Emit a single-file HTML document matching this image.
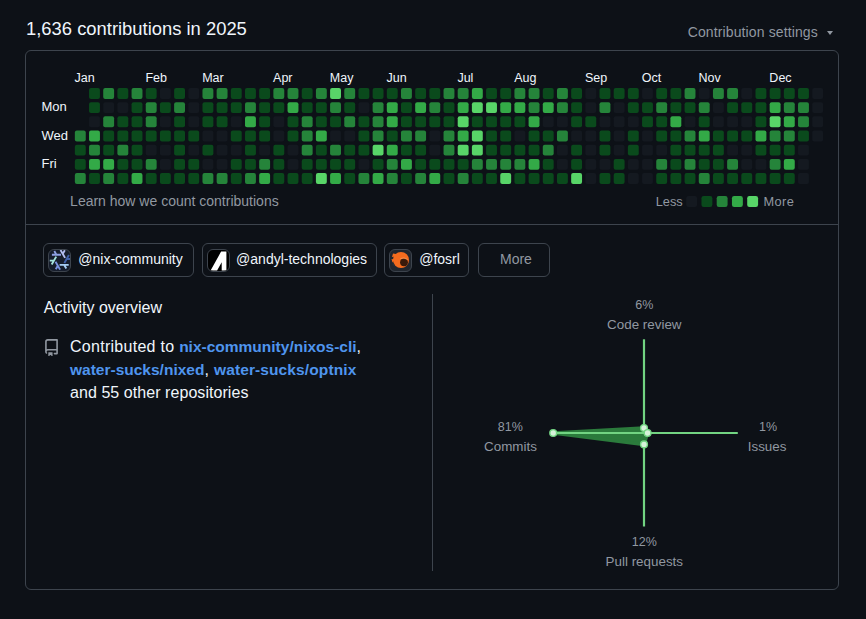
<!DOCTYPE html>
<html><head><meta charset="utf-8">
<style>
html,body{margin:0;padding:0;}
body{width:866px;height:619px;background:#0d1117;position:relative;overflow:hidden;font-family:"Liberation Sans",sans-serif;color:#f0f6fc;}
.a{position:absolute;white-space:nowrap;}
.title{left:26px;top:19.6px;font-size:18.4px;line-height:18.4px;color:#f0f6fc;}
.settings{left:687.7px;top:25.3px;font-size:14px;line-height:14px;color:#9198a1;letter-spacing:0.12px;}
.caret{position:absolute;left:827px;top:30.6px;width:0;height:0;border-left:3.6px solid transparent;border-right:3.6px solid transparent;border-top:4.6px solid #9198a1;}
.box{position:absolute;left:25px;top:50px;width:812px;height:538px;border:1px solid #3d444d;border-radius:6px;}
.mon{position:absolute;top:72px;font-size:12.5px;line-height:12.5px;color:#f0f6fc;white-space:nowrap;}
.day{position:absolute;left:41.5px;font-size:13px;line-height:13px;color:#f0f6fc;}
.muted{color:#9198a1;}
.divider{position:absolute;left:26px;top:224px;width:812px;height:1px;background:#3d444d;}
.btn{position:absolute;top:243px;height:32px;border:1px solid #3d444d;border-radius:6px;box-sizing:content-box;}
.av{position:absolute;top:5px;left:4px;width:21px;height:21px;border:1px solid #3d444d;border-radius:6px;overflow:hidden;background:#151b23;}
.bt{position:absolute;top:7.6px;font-size:14px;line-height:14px;color:#f0f6fc;white-space:nowrap;}
.lnk{color:#4f95ee;font-weight:bold;font-size:15.5px;}
.ln{position:absolute;left:70px;font-size:16px;line-height:16px;white-space:nowrap;color:#f0f6fc;}
.rl{position:absolute;color:#9198a1;white-space:nowrap;text-align:center;width:120px;}
</style></head><body>
<div class="a title">1,636 contributions in 2025</div>
<div class="a settings">Contribution settings</div>
<div class="caret"></div>
<div class="box"></div>
<div class="mon" style="left:74.55px">Jan</div>
<div class="mon" style="left:145.45px">Feb</div>
<div class="mon" style="left:202.17px">Mar</div>
<div class="mon" style="left:273.07px">Apr</div>
<div class="mon" style="left:329.79px">May</div>
<div class="mon" style="left:386.51px">Jun</div>
<div class="mon" style="left:457.41px">Jul</div>
<div class="mon" style="left:514.13px">Aug</div>
<div class="mon" style="left:585.03px">Sep</div>
<div class="mon" style="left:641.75px">Oct</div>
<div class="mon" style="left:698.47px">Nov</div>
<div class="mon" style="left:769.37px">Dec</div>
<div class="day" style="top:100px">Mon</div>
<div class="day" style="top:128.7px">Wed</div>
<div class="day" style="top:157px">Fri</div>
<svg width="866" height="619" style="position:absolute;left:0;top:0">
<rect x="74.85" y="130.54" width="10.9" height="10.9" rx="2" fill="#25843a"/>
<rect x="74.85" y="144.72" width="10.9" height="10.9" rx="2" fill="#0a4a1c"/>
<rect x="74.85" y="158.90" width="10.9" height="10.9" rx="2" fill="#0a4a1c"/>
<rect x="74.85" y="173.08" width="10.9" height="10.9" rx="2" fill="#25843a"/>
<rect x="89.03" y="88.00" width="10.9" height="10.9" rx="2" fill="#0a4a1c"/>
<rect x="89.03" y="102.18" width="10.9" height="10.9" rx="2" fill="#0a4a1c"/>
<rect x="89.03" y="116.36" width="10.9" height="10.9" rx="2" fill="#141920"/>
<rect x="89.03" y="130.54" width="10.9" height="10.9" rx="2" fill="#33aa47"/>
<rect x="89.03" y="144.72" width="10.9" height="10.9" rx="2" fill="#25843a"/>
<rect x="89.03" y="158.90" width="10.9" height="10.9" rx="2" fill="#33aa47"/>
<rect x="89.03" y="173.08" width="10.9" height="10.9" rx="2" fill="#0a4a1c"/>
<rect x="103.21" y="88.00" width="10.9" height="10.9" rx="2" fill="#25843a"/>
<rect x="103.21" y="102.18" width="10.9" height="10.9" rx="2" fill="#141920"/>
<rect x="103.21" y="116.36" width="10.9" height="10.9" rx="2" fill="#25843a"/>
<rect x="103.21" y="130.54" width="10.9" height="10.9" rx="2" fill="#0a4a1c"/>
<rect x="103.21" y="144.72" width="10.9" height="10.9" rx="2" fill="#0a4a1c"/>
<rect x="103.21" y="158.90" width="10.9" height="10.9" rx="2" fill="#33aa47"/>
<rect x="103.21" y="173.08" width="10.9" height="10.9" rx="2" fill="#25843a"/>
<rect x="117.39" y="88.00" width="10.9" height="10.9" rx="2" fill="#0a4a1c"/>
<rect x="117.39" y="102.18" width="10.9" height="10.9" rx="2" fill="#141920"/>
<rect x="117.39" y="116.36" width="10.9" height="10.9" rx="2" fill="#0a4a1c"/>
<rect x="117.39" y="130.54" width="10.9" height="10.9" rx="2" fill="#0a4a1c"/>
<rect x="117.39" y="144.72" width="10.9" height="10.9" rx="2" fill="#25843a"/>
<rect x="117.39" y="158.90" width="10.9" height="10.9" rx="2" fill="#0a4a1c"/>
<rect x="117.39" y="173.08" width="10.9" height="10.9" rx="2" fill="#0a4a1c"/>
<rect x="131.57" y="88.00" width="10.9" height="10.9" rx="2" fill="#25843a"/>
<rect x="131.57" y="102.18" width="10.9" height="10.9" rx="2" fill="#0a4a1c"/>
<rect x="131.57" y="116.36" width="10.9" height="10.9" rx="2" fill="#0a4a1c"/>
<rect x="131.57" y="130.54" width="10.9" height="10.9" rx="2" fill="#0a4a1c"/>
<rect x="131.57" y="144.72" width="10.9" height="10.9" rx="2" fill="#0a4a1c"/>
<rect x="131.57" y="158.90" width="10.9" height="10.9" rx="2" fill="#0a4a1c"/>
<rect x="131.57" y="173.08" width="10.9" height="10.9" rx="2" fill="#33aa47"/>
<rect x="145.75" y="88.00" width="10.9" height="10.9" rx="2" fill="#0a4a1c"/>
<rect x="145.75" y="102.18" width="10.9" height="10.9" rx="2" fill="#25843a"/>
<rect x="145.75" y="116.36" width="10.9" height="10.9" rx="2" fill="#25843a"/>
<rect x="145.75" y="130.54" width="10.9" height="10.9" rx="2" fill="#0a4a1c"/>
<rect x="145.75" y="144.72" width="10.9" height="10.9" rx="2" fill="#141920"/>
<rect x="145.75" y="158.90" width="10.9" height="10.9" rx="2" fill="#25843a"/>
<rect x="145.75" y="173.08" width="10.9" height="10.9" rx="2" fill="#0a4a1c"/>
<rect x="159.93" y="88.00" width="10.9" height="10.9" rx="2" fill="#141920"/>
<rect x="159.93" y="102.18" width="10.9" height="10.9" rx="2" fill="#0a4a1c"/>
<rect x="159.93" y="116.36" width="10.9" height="10.9" rx="2" fill="#141920"/>
<rect x="159.93" y="130.54" width="10.9" height="10.9" rx="2" fill="#0a4a1c"/>
<rect x="159.93" y="144.72" width="10.9" height="10.9" rx="2" fill="#141920"/>
<rect x="159.93" y="158.90" width="10.9" height="10.9" rx="2" fill="#141920"/>
<rect x="159.93" y="173.08" width="10.9" height="10.9" rx="2" fill="#0a4a1c"/>
<rect x="174.11" y="88.00" width="10.9" height="10.9" rx="2" fill="#0a4a1c"/>
<rect x="174.11" y="102.18" width="10.9" height="10.9" rx="2" fill="#25843a"/>
<rect x="174.11" y="116.36" width="10.9" height="10.9" rx="2" fill="#0a4a1c"/>
<rect x="174.11" y="130.54" width="10.9" height="10.9" rx="2" fill="#0a4a1c"/>
<rect x="174.11" y="144.72" width="10.9" height="10.9" rx="2" fill="#0a4a1c"/>
<rect x="174.11" y="158.90" width="10.9" height="10.9" rx="2" fill="#0a4a1c"/>
<rect x="174.11" y="173.08" width="10.9" height="10.9" rx="2" fill="#0a4a1c"/>
<rect x="188.29" y="88.00" width="10.9" height="10.9" rx="2" fill="#141920"/>
<rect x="188.29" y="102.18" width="10.9" height="10.9" rx="2" fill="#141920"/>
<rect x="188.29" y="116.36" width="10.9" height="10.9" rx="2" fill="#141920"/>
<rect x="188.29" y="130.54" width="10.9" height="10.9" rx="2" fill="#0a4a1c"/>
<rect x="188.29" y="144.72" width="10.9" height="10.9" rx="2" fill="#141920"/>
<rect x="188.29" y="158.90" width="10.9" height="10.9" rx="2" fill="#0a4a1c"/>
<rect x="188.29" y="173.08" width="10.9" height="10.9" rx="2" fill="#0a4a1c"/>
<rect x="202.47" y="88.00" width="10.9" height="10.9" rx="2" fill="#25843a"/>
<rect x="202.47" y="102.18" width="10.9" height="10.9" rx="2" fill="#0a4a1c"/>
<rect x="202.47" y="116.36" width="10.9" height="10.9" rx="2" fill="#0a4a1c"/>
<rect x="202.47" y="130.54" width="10.9" height="10.9" rx="2" fill="#141920"/>
<rect x="202.47" y="144.72" width="10.9" height="10.9" rx="2" fill="#0a4a1c"/>
<rect x="202.47" y="158.90" width="10.9" height="10.9" rx="2" fill="#141920"/>
<rect x="202.47" y="173.08" width="10.9" height="10.9" rx="2" fill="#25843a"/>
<rect x="216.65" y="88.00" width="10.9" height="10.9" rx="2" fill="#25843a"/>
<rect x="216.65" y="102.18" width="10.9" height="10.9" rx="2" fill="#0a4a1c"/>
<rect x="216.65" y="116.36" width="10.9" height="10.9" rx="2" fill="#0a4a1c"/>
<rect x="216.65" y="130.54" width="10.9" height="10.9" rx="2" fill="#141920"/>
<rect x="216.65" y="144.72" width="10.9" height="10.9" rx="2" fill="#141920"/>
<rect x="216.65" y="158.90" width="10.9" height="10.9" rx="2" fill="#141920"/>
<rect x="216.65" y="173.08" width="10.9" height="10.9" rx="2" fill="#25843a"/>
<rect x="230.83" y="88.00" width="10.9" height="10.9" rx="2" fill="#0a4a1c"/>
<rect x="230.83" y="102.18" width="10.9" height="10.9" rx="2" fill="#0a4a1c"/>
<rect x="230.83" y="116.36" width="10.9" height="10.9" rx="2" fill="#141920"/>
<rect x="230.83" y="130.54" width="10.9" height="10.9" rx="2" fill="#0a4a1c"/>
<rect x="230.83" y="144.72" width="10.9" height="10.9" rx="2" fill="#141920"/>
<rect x="230.83" y="158.90" width="10.9" height="10.9" rx="2" fill="#0a4a1c"/>
<rect x="230.83" y="173.08" width="10.9" height="10.9" rx="2" fill="#0a4a1c"/>
<rect x="245.01" y="88.00" width="10.9" height="10.9" rx="2" fill="#0a4a1c"/>
<rect x="245.01" y="102.18" width="10.9" height="10.9" rx="2" fill="#25843a"/>
<rect x="245.01" y="116.36" width="10.9" height="10.9" rx="2" fill="#33aa47"/>
<rect x="245.01" y="130.54" width="10.9" height="10.9" rx="2" fill="#0a4a1c"/>
<rect x="245.01" y="144.72" width="10.9" height="10.9" rx="2" fill="#0a4a1c"/>
<rect x="245.01" y="158.90" width="10.9" height="10.9" rx="2" fill="#0a4a1c"/>
<rect x="245.01" y="173.08" width="10.9" height="10.9" rx="2" fill="#25843a"/>
<rect x="259.19" y="88.00" width="10.9" height="10.9" rx="2" fill="#0a4a1c"/>
<rect x="259.19" y="102.18" width="10.9" height="10.9" rx="2" fill="#0a4a1c"/>
<rect x="259.19" y="116.36" width="10.9" height="10.9" rx="2" fill="#0a4a1c"/>
<rect x="259.19" y="130.54" width="10.9" height="10.9" rx="2" fill="#0a4a1c"/>
<rect x="259.19" y="144.72" width="10.9" height="10.9" rx="2" fill="#141920"/>
<rect x="259.19" y="158.90" width="10.9" height="10.9" rx="2" fill="#25843a"/>
<rect x="259.19" y="173.08" width="10.9" height="10.9" rx="2" fill="#33aa47"/>
<rect x="273.37" y="88.00" width="10.9" height="10.9" rx="2" fill="#25843a"/>
<rect x="273.37" y="102.18" width="10.9" height="10.9" rx="2" fill="#0a4a1c"/>
<rect x="273.37" y="116.36" width="10.9" height="10.9" rx="2" fill="#141920"/>
<rect x="273.37" y="130.54" width="10.9" height="10.9" rx="2" fill="#141920"/>
<rect x="273.37" y="144.72" width="10.9" height="10.9" rx="2" fill="#0a4a1c"/>
<rect x="273.37" y="158.90" width="10.9" height="10.9" rx="2" fill="#0a4a1c"/>
<rect x="273.37" y="173.08" width="10.9" height="10.9" rx="2" fill="#0a4a1c"/>
<rect x="287.55" y="88.00" width="10.9" height="10.9" rx="2" fill="#25843a"/>
<rect x="287.55" y="102.18" width="10.9" height="10.9" rx="2" fill="#33aa47"/>
<rect x="287.55" y="116.36" width="10.9" height="10.9" rx="2" fill="#0a4a1c"/>
<rect x="287.55" y="130.54" width="10.9" height="10.9" rx="2" fill="#0a4a1c"/>
<rect x="287.55" y="144.72" width="10.9" height="10.9" rx="2" fill="#141920"/>
<rect x="287.55" y="158.90" width="10.9" height="10.9" rx="2" fill="#141920"/>
<rect x="287.55" y="173.08" width="10.9" height="10.9" rx="2" fill="#0a4a1c"/>
<rect x="301.73" y="88.00" width="10.9" height="10.9" rx="2" fill="#0a4a1c"/>
<rect x="301.73" y="102.18" width="10.9" height="10.9" rx="2" fill="#0a4a1c"/>
<rect x="301.73" y="116.36" width="10.9" height="10.9" rx="2" fill="#25843a"/>
<rect x="301.73" y="130.54" width="10.9" height="10.9" rx="2" fill="#25843a"/>
<rect x="301.73" y="144.72" width="10.9" height="10.9" rx="2" fill="#25843a"/>
<rect x="301.73" y="158.90" width="10.9" height="10.9" rx="2" fill="#0a4a1c"/>
<rect x="301.73" y="173.08" width="10.9" height="10.9" rx="2" fill="#0a4a1c"/>
<rect x="315.91" y="88.00" width="10.9" height="10.9" rx="2" fill="#25843a"/>
<rect x="315.91" y="102.18" width="10.9" height="10.9" rx="2" fill="#0a4a1c"/>
<rect x="315.91" y="116.36" width="10.9" height="10.9" rx="2" fill="#0a4a1c"/>
<rect x="315.91" y="130.54" width="10.9" height="10.9" rx="2" fill="#33aa47"/>
<rect x="315.91" y="144.72" width="10.9" height="10.9" rx="2" fill="#0a4a1c"/>
<rect x="315.91" y="158.90" width="10.9" height="10.9" rx="2" fill="#0a4a1c"/>
<rect x="315.91" y="173.08" width="10.9" height="10.9" rx="2" fill="#58d568"/>
<rect x="330.09" y="88.00" width="10.9" height="10.9" rx="2" fill="#58d568"/>
<rect x="330.09" y="102.18" width="10.9" height="10.9" rx="2" fill="#25843a"/>
<rect x="330.09" y="116.36" width="10.9" height="10.9" rx="2" fill="#0a4a1c"/>
<rect x="330.09" y="130.54" width="10.9" height="10.9" rx="2" fill="#141920"/>
<rect x="330.09" y="144.72" width="10.9" height="10.9" rx="2" fill="#25843a"/>
<rect x="330.09" y="158.90" width="10.9" height="10.9" rx="2" fill="#0a4a1c"/>
<rect x="330.09" y="173.08" width="10.9" height="10.9" rx="2" fill="#33aa47"/>
<rect x="344.27" y="88.00" width="10.9" height="10.9" rx="2" fill="#25843a"/>
<rect x="344.27" y="102.18" width="10.9" height="10.9" rx="2" fill="#0a4a1c"/>
<rect x="344.27" y="116.36" width="10.9" height="10.9" rx="2" fill="#25843a"/>
<rect x="344.27" y="130.54" width="10.9" height="10.9" rx="2" fill="#141920"/>
<rect x="344.27" y="144.72" width="10.9" height="10.9" rx="2" fill="#0a4a1c"/>
<rect x="344.27" y="158.90" width="10.9" height="10.9" rx="2" fill="#0a4a1c"/>
<rect x="344.27" y="173.08" width="10.9" height="10.9" rx="2" fill="#0a4a1c"/>
<rect x="358.45" y="88.00" width="10.9" height="10.9" rx="2" fill="#0a4a1c"/>
<rect x="358.45" y="102.18" width="10.9" height="10.9" rx="2" fill="#141920"/>
<rect x="358.45" y="116.36" width="10.9" height="10.9" rx="2" fill="#0a4a1c"/>
<rect x="358.45" y="130.54" width="10.9" height="10.9" rx="2" fill="#0a4a1c"/>
<rect x="358.45" y="144.72" width="10.9" height="10.9" rx="2" fill="#0a4a1c"/>
<rect x="358.45" y="158.90" width="10.9" height="10.9" rx="2" fill="#141920"/>
<rect x="358.45" y="173.08" width="10.9" height="10.9" rx="2" fill="#25843a"/>
<rect x="372.63" y="88.00" width="10.9" height="10.9" rx="2" fill="#0a4a1c"/>
<rect x="372.63" y="102.18" width="10.9" height="10.9" rx="2" fill="#25843a"/>
<rect x="372.63" y="116.36" width="10.9" height="10.9" rx="2" fill="#25843a"/>
<rect x="372.63" y="130.54" width="10.9" height="10.9" rx="2" fill="#25843a"/>
<rect x="372.63" y="144.72" width="10.9" height="10.9" rx="2" fill="#58d568"/>
<rect x="372.63" y="158.90" width="10.9" height="10.9" rx="2" fill="#0a4a1c"/>
<rect x="372.63" y="173.08" width="10.9" height="10.9" rx="2" fill="#33aa47"/>
<rect x="386.81" y="88.00" width="10.9" height="10.9" rx="2" fill="#0a4a1c"/>
<rect x="386.81" y="102.18" width="10.9" height="10.9" rx="2" fill="#33aa47"/>
<rect x="386.81" y="116.36" width="10.9" height="10.9" rx="2" fill="#33aa47"/>
<rect x="386.81" y="130.54" width="10.9" height="10.9" rx="2" fill="#0a4a1c"/>
<rect x="386.81" y="144.72" width="10.9" height="10.9" rx="2" fill="#33aa47"/>
<rect x="386.81" y="158.90" width="10.9" height="10.9" rx="2" fill="#25843a"/>
<rect x="386.81" y="173.08" width="10.9" height="10.9" rx="2" fill="#25843a"/>
<rect x="400.99" y="88.00" width="10.9" height="10.9" rx="2" fill="#25843a"/>
<rect x="400.99" y="102.18" width="10.9" height="10.9" rx="2" fill="#0a4a1c"/>
<rect x="400.99" y="116.36" width="10.9" height="10.9" rx="2" fill="#0a4a1c"/>
<rect x="400.99" y="130.54" width="10.9" height="10.9" rx="2" fill="#25843a"/>
<rect x="400.99" y="144.72" width="10.9" height="10.9" rx="2" fill="#0a4a1c"/>
<rect x="400.99" y="158.90" width="10.9" height="10.9" rx="2" fill="#33aa47"/>
<rect x="400.99" y="173.08" width="10.9" height="10.9" rx="2" fill="#0a4a1c"/>
<rect x="415.17" y="88.00" width="10.9" height="10.9" rx="2" fill="#0a4a1c"/>
<rect x="415.17" y="102.18" width="10.9" height="10.9" rx="2" fill="#33aa47"/>
<rect x="415.17" y="116.36" width="10.9" height="10.9" rx="2" fill="#0a4a1c"/>
<rect x="415.17" y="130.54" width="10.9" height="10.9" rx="2" fill="#25843a"/>
<rect x="415.17" y="144.72" width="10.9" height="10.9" rx="2" fill="#0a4a1c"/>
<rect x="415.17" y="158.90" width="10.9" height="10.9" rx="2" fill="#0a4a1c"/>
<rect x="415.17" y="173.08" width="10.9" height="10.9" rx="2" fill="#25843a"/>
<rect x="429.35" y="88.00" width="10.9" height="10.9" rx="2" fill="#0a4a1c"/>
<rect x="429.35" y="102.18" width="10.9" height="10.9" rx="2" fill="#25843a"/>
<rect x="429.35" y="116.36" width="10.9" height="10.9" rx="2" fill="#0a4a1c"/>
<rect x="429.35" y="130.54" width="10.9" height="10.9" rx="2" fill="#141920"/>
<rect x="429.35" y="144.72" width="10.9" height="10.9" rx="2" fill="#141920"/>
<rect x="429.35" y="158.90" width="10.9" height="10.9" rx="2" fill="#0a4a1c"/>
<rect x="429.35" y="173.08" width="10.9" height="10.9" rx="2" fill="#33aa47"/>
<rect x="443.53" y="88.00" width="10.9" height="10.9" rx="2" fill="#25843a"/>
<rect x="443.53" y="102.18" width="10.9" height="10.9" rx="2" fill="#0a4a1c"/>
<rect x="443.53" y="116.36" width="10.9" height="10.9" rx="2" fill="#0a4a1c"/>
<rect x="443.53" y="130.54" width="10.9" height="10.9" rx="2" fill="#25843a"/>
<rect x="443.53" y="144.72" width="10.9" height="10.9" rx="2" fill="#25843a"/>
<rect x="443.53" y="158.90" width="10.9" height="10.9" rx="2" fill="#0a4a1c"/>
<rect x="443.53" y="173.08" width="10.9" height="10.9" rx="2" fill="#0a4a1c"/>
<rect x="457.71" y="88.00" width="10.9" height="10.9" rx="2" fill="#25843a"/>
<rect x="457.71" y="102.18" width="10.9" height="10.9" rx="2" fill="#33aa47"/>
<rect x="457.71" y="116.36" width="10.9" height="10.9" rx="2" fill="#58d568"/>
<rect x="457.71" y="130.54" width="10.9" height="10.9" rx="2" fill="#33aa47"/>
<rect x="457.71" y="144.72" width="10.9" height="10.9" rx="2" fill="#58d568"/>
<rect x="457.71" y="158.90" width="10.9" height="10.9" rx="2" fill="#0a4a1c"/>
<rect x="457.71" y="173.08" width="10.9" height="10.9" rx="2" fill="#25843a"/>
<rect x="471.89" y="88.00" width="10.9" height="10.9" rx="2" fill="#33aa47"/>
<rect x="471.89" y="102.18" width="10.9" height="10.9" rx="2" fill="#58d568"/>
<rect x="471.89" y="116.36" width="10.9" height="10.9" rx="2" fill="#0a4a1c"/>
<rect x="471.89" y="130.54" width="10.9" height="10.9" rx="2" fill="#58d568"/>
<rect x="471.89" y="144.72" width="10.9" height="10.9" rx="2" fill="#58d568"/>
<rect x="471.89" y="158.90" width="10.9" height="10.9" rx="2" fill="#25843a"/>
<rect x="471.89" y="173.08" width="10.9" height="10.9" rx="2" fill="#0a4a1c"/>
<rect x="486.07" y="88.00" width="10.9" height="10.9" rx="2" fill="#0a4a1c"/>
<rect x="486.07" y="102.18" width="10.9" height="10.9" rx="2" fill="#58d568"/>
<rect x="486.07" y="116.36" width="10.9" height="10.9" rx="2" fill="#0a4a1c"/>
<rect x="486.07" y="130.54" width="10.9" height="10.9" rx="2" fill="#0a4a1c"/>
<rect x="486.07" y="144.72" width="10.9" height="10.9" rx="2" fill="#0a4a1c"/>
<rect x="486.07" y="158.90" width="10.9" height="10.9" rx="2" fill="#25843a"/>
<rect x="486.07" y="173.08" width="10.9" height="10.9" rx="2" fill="#0a4a1c"/>
<rect x="500.25" y="88.00" width="10.9" height="10.9" rx="2" fill="#0a4a1c"/>
<rect x="500.25" y="102.18" width="10.9" height="10.9" rx="2" fill="#33aa47"/>
<rect x="500.25" y="116.36" width="10.9" height="10.9" rx="2" fill="#0a4a1c"/>
<rect x="500.25" y="130.54" width="10.9" height="10.9" rx="2" fill="#0a4a1c"/>
<rect x="500.25" y="144.72" width="10.9" height="10.9" rx="2" fill="#0a4a1c"/>
<rect x="500.25" y="158.90" width="10.9" height="10.9" rx="2" fill="#25843a"/>
<rect x="500.25" y="173.08" width="10.9" height="10.9" rx="2" fill="#58d568"/>
<rect x="514.43" y="88.00" width="10.9" height="10.9" rx="2" fill="#25843a"/>
<rect x="514.43" y="102.18" width="10.9" height="10.9" rx="2" fill="#33aa47"/>
<rect x="514.43" y="116.36" width="10.9" height="10.9" rx="2" fill="#0a4a1c"/>
<rect x="514.43" y="130.54" width="10.9" height="10.9" rx="2" fill="#141920"/>
<rect x="514.43" y="144.72" width="10.9" height="10.9" rx="2" fill="#0a4a1c"/>
<rect x="514.43" y="158.90" width="10.9" height="10.9" rx="2" fill="#25843a"/>
<rect x="514.43" y="173.08" width="10.9" height="10.9" rx="2" fill="#0a4a1c"/>
<rect x="528.61" y="88.00" width="10.9" height="10.9" rx="2" fill="#25843a"/>
<rect x="528.61" y="102.18" width="10.9" height="10.9" rx="2" fill="#25843a"/>
<rect x="528.61" y="116.36" width="10.9" height="10.9" rx="2" fill="#33aa47"/>
<rect x="528.61" y="130.54" width="10.9" height="10.9" rx="2" fill="#0a4a1c"/>
<rect x="528.61" y="144.72" width="10.9" height="10.9" rx="2" fill="#0a4a1c"/>
<rect x="528.61" y="158.90" width="10.9" height="10.9" rx="2" fill="#33aa47"/>
<rect x="528.61" y="173.08" width="10.9" height="10.9" rx="2" fill="#0a4a1c"/>
<rect x="542.79" y="88.00" width="10.9" height="10.9" rx="2" fill="#0a4a1c"/>
<rect x="542.79" y="102.18" width="10.9" height="10.9" rx="2" fill="#33aa47"/>
<rect x="542.79" y="116.36" width="10.9" height="10.9" rx="2" fill="#141920"/>
<rect x="542.79" y="130.54" width="10.9" height="10.9" rx="2" fill="#0a4a1c"/>
<rect x="542.79" y="144.72" width="10.9" height="10.9" rx="2" fill="#25843a"/>
<rect x="542.79" y="158.90" width="10.9" height="10.9" rx="2" fill="#0a4a1c"/>
<rect x="542.79" y="173.08" width="10.9" height="10.9" rx="2" fill="#0a4a1c"/>
<rect x="556.97" y="88.00" width="10.9" height="10.9" rx="2" fill="#25843a"/>
<rect x="556.97" y="102.18" width="10.9" height="10.9" rx="2" fill="#25843a"/>
<rect x="556.97" y="116.36" width="10.9" height="10.9" rx="2" fill="#141920"/>
<rect x="556.97" y="130.54" width="10.9" height="10.9" rx="2" fill="#25843a"/>
<rect x="556.97" y="144.72" width="10.9" height="10.9" rx="2" fill="#141920"/>
<rect x="556.97" y="158.90" width="10.9" height="10.9" rx="2" fill="#141920"/>
<rect x="556.97" y="173.08" width="10.9" height="10.9" rx="2" fill="#0a4a1c"/>
<rect x="571.15" y="88.00" width="10.9" height="10.9" rx="2" fill="#0a4a1c"/>
<rect x="571.15" y="102.18" width="10.9" height="10.9" rx="2" fill="#0a4a1c"/>
<rect x="571.15" y="116.36" width="10.9" height="10.9" rx="2" fill="#0a4a1c"/>
<rect x="571.15" y="130.54" width="10.9" height="10.9" rx="2" fill="#141920"/>
<rect x="571.15" y="144.72" width="10.9" height="10.9" rx="2" fill="#0a4a1c"/>
<rect x="571.15" y="158.90" width="10.9" height="10.9" rx="2" fill="#0a4a1c"/>
<rect x="571.15" y="173.08" width="10.9" height="10.9" rx="2" fill="#58d568"/>
<rect x="585.33" y="88.00" width="10.9" height="10.9" rx="2" fill="#141920"/>
<rect x="585.33" y="102.18" width="10.9" height="10.9" rx="2" fill="#141920"/>
<rect x="585.33" y="116.36" width="10.9" height="10.9" rx="2" fill="#0a4a1c"/>
<rect x="585.33" y="130.54" width="10.9" height="10.9" rx="2" fill="#141920"/>
<rect x="585.33" y="144.72" width="10.9" height="10.9" rx="2" fill="#141920"/>
<rect x="585.33" y="158.90" width="10.9" height="10.9" rx="2" fill="#141920"/>
<rect x="585.33" y="173.08" width="10.9" height="10.9" rx="2" fill="#141920"/>
<rect x="599.51" y="88.00" width="10.9" height="10.9" rx="2" fill="#0a4a1c"/>
<rect x="599.51" y="102.18" width="10.9" height="10.9" rx="2" fill="#25843a"/>
<rect x="599.51" y="116.36" width="10.9" height="10.9" rx="2" fill="#141920"/>
<rect x="599.51" y="130.54" width="10.9" height="10.9" rx="2" fill="#0a4a1c"/>
<rect x="599.51" y="144.72" width="10.9" height="10.9" rx="2" fill="#0a4a1c"/>
<rect x="599.51" y="158.90" width="10.9" height="10.9" rx="2" fill="#141920"/>
<rect x="599.51" y="173.08" width="10.9" height="10.9" rx="2" fill="#0a4a1c"/>
<rect x="613.69" y="88.00" width="10.9" height="10.9" rx="2" fill="#0a4a1c"/>
<rect x="613.69" y="102.18" width="10.9" height="10.9" rx="2" fill="#141920"/>
<rect x="613.69" y="116.36" width="10.9" height="10.9" rx="2" fill="#141920"/>
<rect x="613.69" y="130.54" width="10.9" height="10.9" rx="2" fill="#141920"/>
<rect x="613.69" y="144.72" width="10.9" height="10.9" rx="2" fill="#141920"/>
<rect x="613.69" y="158.90" width="10.9" height="10.9" rx="2" fill="#0a4a1c"/>
<rect x="613.69" y="173.08" width="10.9" height="10.9" rx="2" fill="#0a4a1c"/>
<rect x="627.87" y="88.00" width="10.9" height="10.9" rx="2" fill="#0a4a1c"/>
<rect x="627.87" y="102.18" width="10.9" height="10.9" rx="2" fill="#0a4a1c"/>
<rect x="627.87" y="116.36" width="10.9" height="10.9" rx="2" fill="#141920"/>
<rect x="627.87" y="130.54" width="10.9" height="10.9" rx="2" fill="#0a4a1c"/>
<rect x="627.87" y="144.72" width="10.9" height="10.9" rx="2" fill="#0a4a1c"/>
<rect x="627.87" y="158.90" width="10.9" height="10.9" rx="2" fill="#141920"/>
<rect x="627.87" y="173.08" width="10.9" height="10.9" rx="2" fill="#141920"/>
<rect x="642.05" y="88.00" width="10.9" height="10.9" rx="2" fill="#141920"/>
<rect x="642.05" y="102.18" width="10.9" height="10.9" rx="2" fill="#0a4a1c"/>
<rect x="642.05" y="116.36" width="10.9" height="10.9" rx="2" fill="#0a4a1c"/>
<rect x="642.05" y="130.54" width="10.9" height="10.9" rx="2" fill="#141920"/>
<rect x="642.05" y="144.72" width="10.9" height="10.9" rx="2" fill="#141920"/>
<rect x="642.05" y="158.90" width="10.9" height="10.9" rx="2" fill="#141920"/>
<rect x="642.05" y="173.08" width="10.9" height="10.9" rx="2" fill="#141920"/>
<rect x="656.23" y="88.00" width="10.9" height="10.9" rx="2" fill="#0a4a1c"/>
<rect x="656.23" y="102.18" width="10.9" height="10.9" rx="2" fill="#25843a"/>
<rect x="656.23" y="116.36" width="10.9" height="10.9" rx="2" fill="#0a4a1c"/>
<rect x="656.23" y="130.54" width="10.9" height="10.9" rx="2" fill="#0a4a1c"/>
<rect x="656.23" y="144.72" width="10.9" height="10.9" rx="2" fill="#141920"/>
<rect x="656.23" y="158.90" width="10.9" height="10.9" rx="2" fill="#25843a"/>
<rect x="656.23" y="173.08" width="10.9" height="10.9" rx="2" fill="#0a4a1c"/>
<rect x="670.41" y="88.00" width="10.9" height="10.9" rx="2" fill="#0a4a1c"/>
<rect x="670.41" y="102.18" width="10.9" height="10.9" rx="2" fill="#0a4a1c"/>
<rect x="670.41" y="116.36" width="10.9" height="10.9" rx="2" fill="#33aa47"/>
<rect x="670.41" y="130.54" width="10.9" height="10.9" rx="2" fill="#0a4a1c"/>
<rect x="670.41" y="144.72" width="10.9" height="10.9" rx="2" fill="#0a4a1c"/>
<rect x="670.41" y="158.90" width="10.9" height="10.9" rx="2" fill="#0a4a1c"/>
<rect x="670.41" y="173.08" width="10.9" height="10.9" rx="2" fill="#0a4a1c"/>
<rect x="684.59" y="88.00" width="10.9" height="10.9" rx="2" fill="#25843a"/>
<rect x="684.59" y="102.18" width="10.9" height="10.9" rx="2" fill="#0a4a1c"/>
<rect x="684.59" y="116.36" width="10.9" height="10.9" rx="2" fill="#141920"/>
<rect x="684.59" y="130.54" width="10.9" height="10.9" rx="2" fill="#25843a"/>
<rect x="684.59" y="144.72" width="10.9" height="10.9" rx="2" fill="#0a4a1c"/>
<rect x="684.59" y="158.90" width="10.9" height="10.9" rx="2" fill="#25843a"/>
<rect x="684.59" y="173.08" width="10.9" height="10.9" rx="2" fill="#0a4a1c"/>
<rect x="698.77" y="88.00" width="10.9" height="10.9" rx="2" fill="#141920"/>
<rect x="698.77" y="102.18" width="10.9" height="10.9" rx="2" fill="#25843a"/>
<rect x="698.77" y="116.36" width="10.9" height="10.9" rx="2" fill="#0a4a1c"/>
<rect x="698.77" y="130.54" width="10.9" height="10.9" rx="2" fill="#33aa47"/>
<rect x="698.77" y="144.72" width="10.9" height="10.9" rx="2" fill="#0a4a1c"/>
<rect x="698.77" y="158.90" width="10.9" height="10.9" rx="2" fill="#0a4a1c"/>
<rect x="698.77" y="173.08" width="10.9" height="10.9" rx="2" fill="#25843a"/>
<rect x="712.95" y="88.00" width="10.9" height="10.9" rx="2" fill="#25843a"/>
<rect x="712.95" y="102.18" width="10.9" height="10.9" rx="2" fill="#141920"/>
<rect x="712.95" y="116.36" width="10.9" height="10.9" rx="2" fill="#141920"/>
<rect x="712.95" y="130.54" width="10.9" height="10.9" rx="2" fill="#0a4a1c"/>
<rect x="712.95" y="144.72" width="10.9" height="10.9" rx="2" fill="#0a4a1c"/>
<rect x="712.95" y="158.90" width="10.9" height="10.9" rx="2" fill="#0a4a1c"/>
<rect x="712.95" y="173.08" width="10.9" height="10.9" rx="2" fill="#0a4a1c"/>
<rect x="727.13" y="88.00" width="10.9" height="10.9" rx="2" fill="#25843a"/>
<rect x="727.13" y="102.18" width="10.9" height="10.9" rx="2" fill="#0a4a1c"/>
<rect x="727.13" y="116.36" width="10.9" height="10.9" rx="2" fill="#141920"/>
<rect x="727.13" y="130.54" width="10.9" height="10.9" rx="2" fill="#0a4a1c"/>
<rect x="727.13" y="144.72" width="10.9" height="10.9" rx="2" fill="#141920"/>
<rect x="727.13" y="158.90" width="10.9" height="10.9" rx="2" fill="#25843a"/>
<rect x="727.13" y="173.08" width="10.9" height="10.9" rx="2" fill="#0a4a1c"/>
<rect x="741.31" y="88.00" width="10.9" height="10.9" rx="2" fill="#141920"/>
<rect x="741.31" y="102.18" width="10.9" height="10.9" rx="2" fill="#0a4a1c"/>
<rect x="741.31" y="116.36" width="10.9" height="10.9" rx="2" fill="#141920"/>
<rect x="741.31" y="130.54" width="10.9" height="10.9" rx="2" fill="#0a4a1c"/>
<rect x="741.31" y="144.72" width="10.9" height="10.9" rx="2" fill="#141920"/>
<rect x="741.31" y="158.90" width="10.9" height="10.9" rx="2" fill="#141920"/>
<rect x="741.31" y="173.08" width="10.9" height="10.9" rx="2" fill="#0a4a1c"/>
<rect x="755.49" y="88.00" width="10.9" height="10.9" rx="2" fill="#0a4a1c"/>
<rect x="755.49" y="102.18" width="10.9" height="10.9" rx="2" fill="#0a4a1c"/>
<rect x="755.49" y="116.36" width="10.9" height="10.9" rx="2" fill="#0a4a1c"/>
<rect x="755.49" y="130.54" width="10.9" height="10.9" rx="2" fill="#33aa47"/>
<rect x="755.49" y="144.72" width="10.9" height="10.9" rx="2" fill="#0a4a1c"/>
<rect x="755.49" y="158.90" width="10.9" height="10.9" rx="2" fill="#141920"/>
<rect x="755.49" y="173.08" width="10.9" height="10.9" rx="2" fill="#0a4a1c"/>
<rect x="769.67" y="88.00" width="10.9" height="10.9" rx="2" fill="#0a4a1c"/>
<rect x="769.67" y="102.18" width="10.9" height="10.9" rx="2" fill="#33aa47"/>
<rect x="769.67" y="116.36" width="10.9" height="10.9" rx="2" fill="#58d568"/>
<rect x="769.67" y="130.54" width="10.9" height="10.9" rx="2" fill="#25843a"/>
<rect x="769.67" y="144.72" width="10.9" height="10.9" rx="2" fill="#0a4a1c"/>
<rect x="769.67" y="158.90" width="10.9" height="10.9" rx="2" fill="#25843a"/>
<rect x="769.67" y="173.08" width="10.9" height="10.9" rx="2" fill="#0a4a1c"/>
<rect x="783.85" y="88.00" width="10.9" height="10.9" rx="2" fill="#0a4a1c"/>
<rect x="783.85" y="102.18" width="10.9" height="10.9" rx="2" fill="#25843a"/>
<rect x="783.85" y="116.36" width="10.9" height="10.9" rx="2" fill="#33aa47"/>
<rect x="783.85" y="130.54" width="10.9" height="10.9" rx="2" fill="#25843a"/>
<rect x="783.85" y="144.72" width="10.9" height="10.9" rx="2" fill="#0a4a1c"/>
<rect x="783.85" y="158.90" width="10.9" height="10.9" rx="2" fill="#33aa47"/>
<rect x="783.85" y="173.08" width="10.9" height="10.9" rx="2" fill="#0a4a1c"/>
<rect x="798.03" y="88.00" width="10.9" height="10.9" rx="2" fill="#0a4a1c"/>
<rect x="798.03" y="102.18" width="10.9" height="10.9" rx="2" fill="#25843a"/>
<rect x="798.03" y="116.36" width="10.9" height="10.9" rx="2" fill="#25843a"/>
<rect x="798.03" y="130.54" width="10.9" height="10.9" rx="2" fill="#0a4a1c"/>
<rect x="798.03" y="144.72" width="10.9" height="10.9" rx="2" fill="#141920"/>
<rect x="798.03" y="158.90" width="10.9" height="10.9" rx="2" fill="#141920"/>
<rect x="798.03" y="173.08" width="10.9" height="10.9" rx="2" fill="#141920"/>
<rect x="812.21" y="88.00" width="10.9" height="10.9" rx="2" fill="#141920"/>
<rect x="812.21" y="102.18" width="10.9" height="10.9" rx="2" fill="#141920"/>
<rect x="812.21" y="116.36" width="10.9" height="10.9" rx="2" fill="#141920"/>
<rect x="812.21" y="130.54" width="10.9" height="10.9" rx="2" fill="#141920"/>
<rect x="686.20" y="196" width="10.9" height="10.9" rx="2.2" fill="#141920"/>
<rect x="701.45" y="196" width="10.9" height="10.9" rx="2.2" fill="#0a4a1c"/>
<rect x="716.70" y="196" width="10.9" height="10.9" rx="2.2" fill="#25843a"/>
<rect x="731.95" y="196" width="10.9" height="10.9" rx="2.2" fill="#33aa47"/>
<rect x="747.20" y="196" width="10.9" height="10.9" rx="2.2" fill="#58d568"/>
</svg>
<div class="a muted" style="left:70.1px;top:194.25px;font-size:14px;line-height:14px">Learn how we count contributions</div>
<div class="a muted" style="left:655.7px;top:196.2px;font-size:12.8px;line-height:12.8px">Less</div>
<div class="a muted" style="left:763.4px;top:196.2px;font-size:12.8px;line-height:12.8px;letter-spacing:0.4px">More</div>
<div class="divider"></div>

<div class="btn" style="left:43px;width:149px">
  <div class="av" style="background:#161d2c">
    <svg width="21" height="21" viewBox="0 0 21 21"><g stroke-width="1.9" fill="none"><path transform="rotate(0 11.3 9.8)" d="M10.6 14.9 L19.7 14.9 M15.2 14.9 L17.3 18.5" stroke="#a6cdf2"/><path transform="rotate(-60 11.3 9.8)" d="M10.6 14.9 L19.7 14.9 M15.2 14.9 L17.3 18.5" stroke="#3f5fa8"/><path transform="rotate(-120 11.3 9.8)" d="M10.6 14.9 L19.7 14.9 M15.2 14.9 L17.3 18.5" stroke="#b3bdf0"/><path transform="rotate(-180 11.3 9.8)" d="M10.6 14.9 L19.7 14.9 M15.2 14.9 L17.3 18.5" stroke="#8d9fe2"/><path transform="rotate(-240 11.3 9.8)" d="M10.6 14.9 L19.7 14.9 M15.2 14.9 L17.3 18.5" stroke="#a5e3dd"/><path transform="rotate(-300 11.3 9.8)" d="M10.6 14.9 L19.7 14.9 M15.2 14.9 L17.3 18.5" stroke="#7a92e0"/></g></svg>
  </div>
  <div class="bt" style="left:34.3px">@nix-community</div>
</div>
<div class="btn" style="left:202px;width:173px">
  <div class="av" style="background:#000">
    <svg width="21" height="21" viewBox="0 0 21 21"><path d="M2.6 20.5 L13.1 1.6 L18.4 1.6 L18.4 20.5 L13.7 20.5 L13.7 12.3 L9.1 20.5 Z" fill="#fff"/></svg>
  </div>
  <div class="bt" style="left:33.1px">@andyl-technologies</div>
</div>
<div class="btn" style="left:384px;width:83px">
  <div class="av" style="background:#20262e">
    <svg width="21" height="21" viewBox="0 0 21 21"><circle cx="11" cy="10" r="8" fill="#f46b1e"/><path d="M3 3.5 L7.5 4.2 L5.5 6.5 L2 7 Z M1.5 9 L5 9.5 L2.5 12.5 Z" fill="#f46b1e"/><path d="M2.2 14 L4 13 L4.5 17 Z" fill="#2a2f36"/><circle cx="14" cy="12.3" r="3.9" fill="#3a1a0a"/><path d="M10.5 8.5 Q14 7 17.5 9.5" stroke="#f8a060" stroke-width="0.8" fill="none"/></svg>
  </div>
  <div class="bt" style="left:34.2px">@fosrl</div>
</div>
<div class="btn" style="left:478px;width:70px">
  <div class="bt" style="left:21px;color:#9198a1">More</div>
</div>

<div class="a" style="left:43.8px;top:299.5px;font-size:16px;line-height:16px">Activity overview</div>
<svg style="position:absolute;left:43.2px;top:338.6px" width="17" height="17.6" viewBox="0 0 16 16" preserveAspectRatio="none"><path fill="#9198a1" d="M2 2.5A2.5 2.5 0 0 1 4.5 0h8.75a.75.75 0 0 1 .75.75v12.5a.75.75 0 0 1-.75.75h-2.5a.75.75 0 0 1 0-1.5h1.75v-2h-8a1 1 0 0 0-.714 1.7.75.75 0 1 1-1.072 1.05A2.495 2.495 0 0 1 2 11.5Zm10.5-1h-8a1 1 0 0 0-1 1v6.708A2.486 2.486 0 0 1 4.5 9h8ZM5 12.25a.25.25 0 0 1 .25-.25h3.5a.25.25 0 0 1 .25.25v3.25a.25.25 0 0 1-.4.2l-1.45-1.087a.249.249 0 0 0-.3 0L5.4 15.7a.25.25 0 0 1-.4-.2Z"/></svg>
<div class="ln" style="top:339.3px"><span style="letter-spacing:0.28px">Contributed to </span><span class="lnk">nix-community/nixos-cli</span>,</div>
<div class="ln" style="top:362px"><span class="lnk">water-sucks/nixed</span><span style="letter-spacing:0.35px">, </span><span class="lnk" style="letter-spacing:0.11px">water-sucks/optnix</span></div>
<div class="ln" style="top:384.6px;letter-spacing:0.06px">and 55 other repositories</div>

<div style="position:absolute;left:432px;top:293.5px;width:1px;height:277.5px;background:#3d444d"></div>

<svg width="866" height="619" style="position:absolute;left:0;top:0">
  <line x1="644" y1="339.3" x2="644" y2="526.5" stroke="#72d482" stroke-width="2.2"/>
  <line x1="550.4" y1="433" x2="737.8" y2="433" stroke="#72d482" stroke-width="2.2"/>
  <polygon points="553.2,433 644,428 647.6,433 644,444.4" fill="#2b7b3c" stroke="#2b7b3c" stroke-width="3.5" stroke-linejoin="round"/>
  <line x1="553.2" y1="433" x2="644" y2="433" stroke="#72d482" stroke-width="2.2"/>
  <g fill="#d6f2da" stroke="#72d482" stroke-width="1.4">
    <circle cx="553.2" cy="433" r="3.4"/>
    <circle cx="644" cy="428" r="3.4"/>
    <circle cx="647.6" cy="433" r="3.4"/>
    <circle cx="644" cy="444.4" r="3.4"/>
  </g>
</svg>
<div class="rl" style="left:584.3px;top:298.9px;font-size:12.5px;line-height:12.5px">6%</div>
<div class="rl" style="left:584.3px;top:318.20px;font-size:13.4px;line-height:13.4px">Code review</div>
<div class="rl" style="left:584.3px;top:535.90px;font-size:12.5px;line-height:12.5px">12%</div>
<div class="rl" style="left:584.3px;top:554.85px;font-size:13.4px;line-height:13.4px">Pull requests</div>
<div class="rl" style="left:450.3px;top:421.00px;font-size:12.5px;line-height:12.5px">81%</div>
<div class="rl" style="left:450.5px;top:440.25px;font-size:13.4px;line-height:13.4px">Commits</div>
<div class="rl" style="left:708px;top:421.00px;font-size:12.5px;line-height:12.5px">1%</div>
<div class="rl" style="left:707.1px;top:440.25px;font-size:13.4px;line-height:13.4px">Issues</div>
</body></html>
